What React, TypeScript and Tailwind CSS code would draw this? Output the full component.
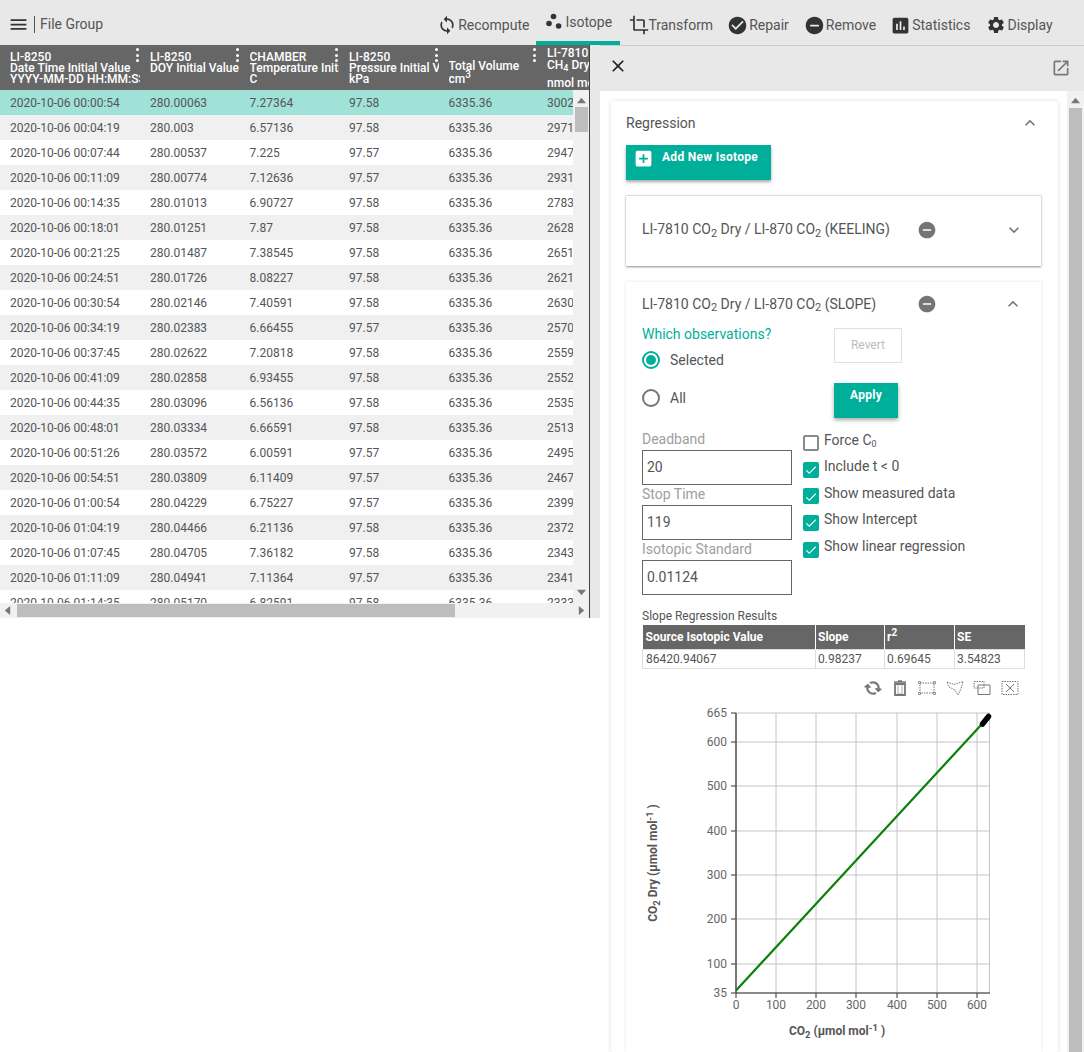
import React from "react";
import { FaSyncAlt } from "react-icons/fa";
import {
  MdAddBox,
  MdAssessment,
  MdAutorenew,
  MdCheck,
  MdCheckCircle,
  MdClose,
  MdCrop,
  MdExpandLess,
  MdExpandMore,
  MdMenu,
  MdOpenInNew,
  MdRemoveCircle,
  MdSettings,
} from "react-icons/md";

const rows = [
  ["2020-10-06 00:00:54", "280.00063", "7.27364", "97.58", "6335.36", "30023.4"],
  ["2020-10-06 00:04:19", "280.003", "6.57136", "97.58", "6335.36", "29714.1"],
  ["2020-10-06 00:07:44", "280.00537", "7.225", "97.57", "6335.36", "29472.9"],
  ["2020-10-06 00:11:09", "280.00774", "7.12636", "97.57", "6335.36", "29311.5"],
  ["2020-10-06 00:14:35", "280.01013", "6.90727", "97.58", "6335.36", "27835.2"],
  ["2020-10-06 00:18:01", "280.01251", "7.87", "97.58", "6335.36", "26281.7"],
  ["2020-10-06 00:21:25", "280.01487", "7.38545", "97.58", "6335.36", "26513.8"],
  ["2020-10-06 00:24:51", "280.01726", "8.08227", "97.58", "6335.36", "26217.4"],
  ["2020-10-06 00:30:54", "280.02146", "7.40591", "97.58", "6335.36", "26304.6"],
  ["2020-10-06 00:34:19", "280.02383", "6.66455", "97.57", "6335.36", "25701.3"],
  ["2020-10-06 00:37:45", "280.02622", "7.20818", "97.58", "6335.36", "25598.2"],
  ["2020-10-06 00:41:09", "280.02858", "6.93455", "97.58", "6335.36", "25524.1"],
  ["2020-10-06 00:44:35", "280.03096", "6.56136", "97.58", "6335.36", "25355.9"],
  ["2020-10-06 00:48:01", "280.03334", "6.66591", "97.58", "6335.36", "25133.0"],
  ["2020-10-06 00:51:26", "280.03572", "6.00591", "97.57", "6335.36", "24957.6"],
  ["2020-10-06 00:54:51", "280.03809", "6.11409", "97.57", "6335.36", "24671.2"],
  ["2020-10-06 01:00:54", "280.04229", "6.75227", "97.57", "6335.36", "23994.8"],
  ["2020-10-06 01:04:19", "280.04466", "6.21136", "97.58", "6335.36", "23722.5"],
  ["2020-10-06 01:07:45", "280.04705", "7.36182", "97.58", "6335.36", "23431.3"],
  ["2020-10-06 01:11:09", "280.04941", "7.11364", "97.57", "6335.36", "23417.7"],
  ["2020-10-06 01:14:35", "280.05170", "6.82591", "97.58", "6335.36", "23332.4"],
];

const colClass =
  "grid w-[658px] shrink-0 grid-cols-[140px_99.5px_99.5px_99.5px_98.5px_120px]";

const Dots = () => (
  <span className="absolute right-[1px] top-[3px] flex flex-col gap-[2.5px]">
    <span className="h-[3px] w-[3px] rounded-full bg-white" />
    <span className="h-[3px] w-[3px] rounded-full bg-white" />
    <span className="h-[3px] w-[3px] rounded-full bg-white" />
  </span>
);

const HeadCell = ({ children }: { children: React.ReactNode }) => (
  <div className="relative h-[45px] overflow-hidden pl-[10px] pr-0 pt-[7px] text-[12px] font-medium leading-[11px] text-white">
    <div className="overflow-hidden whitespace-nowrap">{children}</div>
    <Dots />
  </div>
);

const Arrow = ({ d }: { d: string }) => (
  <svg width="9" height="9" viewBox="0 0 10 10" className="shrink-0">
    <path d={d} fill="#777" />
  </svg>
);

const DataTable = () => (
  <div className="flex h-[573px] w-[589px] flex-col overflow-hidden">
    <div className="h-[45px] shrink-0 overflow-hidden bg-[#666666]">
      <div className={colClass}>
        <HeadCell>
          LI-8250
          <br />
          Date Time Initial Value
          <br />
          YYYY-MM-DD HH:MM:SS
        </HeadCell>
        <HeadCell>
          LI-8250
          <br />
          DOY Initial Value
        </HeadCell>
        <HeadCell>
          CHAMBER
          <br />
          Temperature Initial Value
          <br />C
        </HeadCell>
        <HeadCell>
          LI-8250
          <br />
          Pressure Initial Value
          <br />
          kPa
        </HeadCell>
        <HeadCell>
          <div className="pt-[8px] leading-[13px]">
            Total Volume
            <br />
            cm<sup className="text-[10px] leading-none">3</sup>
          </div>
        </HeadCell>
        <div className="h-[45px] overflow-hidden whitespace-nowrap pl-[10px] pt-[2px] text-[12px] font-medium leading-[12px] text-white">
          LI-7810
          <br />
          CH<sub className="text-[9px] leading-none">4</sub> Dry
          <div className="pt-[6px]">nmol mol⁻¹</div>
        </div>
      </div>
    </div>
    <div className="flex h-[513px] shrink-0">
      <div className="h-[513px] w-[573px] shrink-0 overflow-hidden bg-white">
        {rows.map((row, i) => (
          <div
            key={row[0]}
            className={`${colClass} h-[25px] items-center text-[12px] text-[#555555] ${
              i === 0 ? "bg-[#a0e2d8]" : i % 2 === 1 ? "bg-[#f0f0f0]" : "bg-white"
            }`}
          >
            {row.map((v, j) => (
              <div key={j} className="overflow-hidden whitespace-nowrap pl-[10px]">
                {v}
              </div>
            ))}
          </div>
        ))}
      </div>
      <div className="flex w-[16px] shrink-0 flex-col items-center bg-[#f1f1f1] pt-[6px]">
        <Arrow d="M5 2 L10 8 L0 8 Z" />
        <div className="mt-[2px] h-[25px] w-[13px] bg-[#bdbdbd]" />
        <div className="mt-auto pb-[6px]">
          <Arrow d="M0 2 L10 2 L5 8 Z" />
        </div>
      </div>
    </div>
    <div className="flex h-[15px] shrink-0 items-center bg-[#f1f1f1] px-[3px]">
      <Arrow d="M8 0 L8 10 L2 5 Z" />
      <div className="ml-[5px] h-[13px] w-[438px] bg-[#bdbdbd]" />
      <div className="ml-auto">
        <Arrow d="M2 0 L8 5 L2 10 Z" />
      </div>
    </div>
  </div>
);

const NavItem = ({
  icon,
  label,
  className,
}: {
  icon: React.ReactNode;
  label: string;
  className: string;
}) => (
  <div className={`flex items-center pt-[5px] text-[14px] text-[#555555] ${className}`}>
    {icon}
    <span>{label}</span>
  </div>
);

const TopBar = () => (
  <div className="flex h-[45px] shrink-0 items-stretch bg-[#e8e8e8]">
    <div className="flex items-center pl-[8px] pt-[3px]">
      <MdMenu size={21} className="text-[#333333]" />
      <span className="ml-[5px] h-[17px] w-px bg-[#555555]" />
      <span className="ml-[5px] text-[14px] text-[#555555]">File Group</span>
    </div>
    <NavItem
      className="ml-[334px]"
      icon={<MdAutorenew size={20} className="mr-[1px] -scale-x-100 text-[#333333]" />}
      label="Recompute"
    />
    <div className="ml-[7px] flex w-[84px] items-center border-b-[4px] border-[#00af9a] pl-[10px] pt-[3px] text-[14px] text-[#555555]">
      <svg width="16" height="16" viewBox="0 0 16 16" className="mr-[3px] -mt-[3px]">
        <circle cx="7.5" cy="3.5" r="2.8" fill="#333" />
        <circle cx="3" cy="10.5" r="2.8" fill="#333" />
        <circle cx="12.6" cy="13" r="2.8" fill="#333" />
      </svg>
      <span>Isotope</span>
    </div>
    <NavItem
      className="ml-[9px]"
      icon={<MdCrop size={20} className="-mr-[1px] text-[#333333]" />}
      label="Transform"
    />
    <NavItem
      className="ml-[15px]"
      icon={<MdCheckCircle size={21} className="mr-[1px] -ml-[1px] text-[#333333]" />}
      label="Repair"
    />
    <NavItem
      className="ml-[15px]"
      icon={<MdRemoveCircle size={21} className="mr-[1px] text-[#333333]" />}
      label="Remove"
    />
    <NavItem
      className="ml-[14px]"
      icon={<MdAssessment size={21} className="mr-[1px] text-[#333333]" />}
      label="Statistics"
    />
    <NavItem
      className="ml-[16px]"
      icon={<MdSettings size={20} className="mr-[1px] text-[#333333]" />}
      label="Display"
    />
  </div>
);

const Co2 = () => (
  <>
    CO<sub className="text-[11px] leading-none">2</sub>
  </>
);

const IsotopeHeader = ({ kind, open }: { kind: string; open: boolean }) => (
  <div className="flex items-center text-[14px] text-[#555555]">
    <span className="w-[275px] whitespace-nowrap">
      LI-7810 <Co2 /> Dry / LI-870 <Co2 /> ({kind})
    </span>
    <MdRemoveCircle size={20} className="text-[#757575]" />
    <span className="ml-auto mr-[1px]">
      {open ? (
        <MdExpandLess size={20} className="text-[#757575]" />
      ) : (
        <MdExpandMore size={20} className="text-[#757575]" />
      )}
    </span>
  </div>
);

const Field = ({ label, value, className }: { label: string; value: string; className: string }) => (
  <>
    <div className={`text-[14px] text-[#9e9e9e] ${className}`}>{label}</div>
    <div className="flex h-[35px] items-center border border-[#666666] pl-[4px] text-[14px] text-[#555555]">
      {value}
    </div>
  </>
);

const Check = ({
  label,
  checked,
  textClass = "-mt-[6px]",
}: {
  label: React.ReactNode;
  checked: boolean;
  textClass?: string;
}) => (
  <div className="flex h-[26.67px] items-start gap-[5px]">
    {checked ? (
      <span className="flex h-4 w-4 shrink-0 items-center justify-center rounded-[2px] bg-[#00af9a]">
        <MdCheck size={14} className="mt-[1px] text-white" />
      </span>
    ) : (
      <span className="h-4 w-4 shrink-0 rounded-[2px] border-2 border-[#8a8a8a]" />
    )}
    <span className={`${textClass} whitespace-nowrap text-[14px] leading-[20px] text-[#555555]`}>{label}</span>
  </div>
);

const Radio = ({ on, label, className }: { on: boolean; label: string; className: string }) => (
  <div className={`flex h-[18px] items-center text-[14px] text-[#555555] ${className}`}>
    <span
      className={`flex h-[18px] w-[18px] items-center justify-center rounded-full border-2 ${
        on ? "border-[#00af9a]" : "border-[#757575]"
      }`}
    >
      {on && <span className="h-[10px] w-[10px] rounded-full bg-[#00af9a]" />}
    </span>
    <span className="ml-[10px]">{label}</span>
  </div>
);

const PlotIcon = ({ children }: { children: React.ReactNode }) => (
  <svg width="18" height="16" viewBox="0 0 18 16" fill="none" stroke="#777" strokeWidth="1">
    {children}
  </svg>
);

const PlotTools = () => (
  <div className="mt-[11px] flex h-[16px] justify-end gap-[9.6px] pr-[6px]">
    <FaSyncAlt size={14} className="mr-[1px] mt-[1px] rotate-[50deg] text-[#777777]" />
    <PlotIcon>
      <path d="M4 4 H14 V15 H4 Z" strokeWidth="1.8" />
      <path d="M3 2 H15 M7 1 H11" strokeWidth="1.4" />
      <path d="M7 5 V14 H11 V5" strokeWidth="0.6" />
    </PlotIcon>
    <PlotIcon>
      <path d="M2 3 H16 V13 H2 Z" strokeDasharray="1.5 1" />
      <path d="M0.5 1.5 h2 v2 h-2 Z M15.5 1.5 h2 v2 h-2 Z M0.5 12.5 h2 v2 h-2 Z M15.5 12.5 h2 v2 h-2 Z" strokeWidth="0.8" />
    </PlotIcon>
    <PlotIcon>
      <path d="M1 2 L8 4.5 L17 1.5 L15 9 L12 15 L9 10 L3 7 Z" strokeDasharray="1.5 1" />
    </PlotIcon>
    <PlotIcon>
      <path d="M1 1.5 H11 V8 H1 Z" strokeDasharray="1.5 1" />
      <path d="M5 5 H17 V14.5 H5 Z" />
    </PlotIcon>
    <PlotIcon>
      <path d="M1 1.5 H17 V14.5 H1 Z" strokeDasharray="1.5 1" />
      <path d="M5 4 L13 12 M13 4 L5 12" />
    </PlotIcon>
  </div>
);

const yTicks: [number, string][] = [
  [713, "665"],
  [742, "600"],
  [786, "500"],
  [831, "400"],
  [875, "300"],
  [919, "200"],
  [964, "100"],
  [993, "35"],
];

const xTicks: [number, string][] = [
  [736, "0"],
  [776, "100"],
  [816, "200"],
  [856, "300"],
  [897, "400"],
  [937, "500"],
  [977, "600"],
];

const Chart = () => (
  <svg
    width="383"
    height="352"
    viewBox="642 700 383 352"
    className="mt-[4px] block"
    style={{ fontFamily: "Roboto, sans-serif" }}
  >
    {yTicks.map(([y, t]) => (
      <g key={t}>
        <line x1="736" x2="990" y1={y} y2={y} stroke="#c4c4c4" />
        <line x1="731" x2="736" y1={y} y2={y} stroke="#333" />
        <text x="727" y={y + 4} textAnchor="end" fontSize="12" fill="#666">
          {t}
        </text>
      </g>
    ))}
    {xTicks.map(([x, t]) => (
      <g key={t}>
        <line x1={x} x2={x} y1="713" y2="993" stroke="#c4c4c4" />
        <line x1={x} x2={x} y1="993" y2="998" stroke="#333" />
        <text x={x} y="1009" textAnchor="middle" fontSize="12" fill="#666">
          {t}
        </text>
      </g>
    ))}
    <line x1="989.5" x2="989.5" y1="713" y2="993" stroke="#c4c4c4" />
    <line x1="736" x2="736" y1="713" y2="993" stroke="#333" strokeWidth="1.2" />
    <line x1="736" x2="990" y1="993" y2="993" stroke="#333" strokeWidth="1.2" />
    <line x1="736" y1="990.5" x2="982" y2="724" stroke="#0a800a" strokeWidth="2.2" />
    <path d="M982.5 724 L988.5 716.5" stroke="#000" strokeWidth="5.5" strokeLinecap="round" />
    <text x="837" y="1035" textAnchor="middle" fontSize="12" fontWeight="700" fill="#555">
      CO<tspan fontSize="9.5" dy="3">2</tspan>
      <tspan dy="-3"> (µmol mol</tspan>
      <tspan fontSize="9.5" dy="-4">-1</tspan>
      <tspan dy="4"> )</tspan>
    </text>
    <text
      transform="rotate(-90 657 863)"
      x="657"
      y="863"
      textAnchor="middle"
      fontSize="12"
      fontWeight="700"
      fill="#555"
    >
      CO<tspan fontSize="9.5" dy="3">2</tspan>
      <tspan dy="-3"> Dry (µmol mol</tspan>
      <tspan fontSize="9.5" dy="-4">-1</tspan>
      <tspan dy="4"> )</tspan>
    </text>
  </svg>
);

const SlopeCard = () => (
  <div className="mt-[16px] bg-white px-4 shadow-[0_0_3px_rgba(0,0,0,0.12)]">
    <div className="flex h-[42px] items-center pr-[1px] pt-[2px]">
      <div className="w-full">
        <IsotopeHeader kind="SLOPE" open />
      </div>
    </div>

    {/* Which observations */}
    <div className="grid grid-cols-[192px_1fr]">
      <div>
        <div className="text-[14px] leading-[20px] text-[#00af9a]">Which observations?</div>
        <Radio on label="Selected" className="mt-[7px]" />
        <Radio on={false} label="All" className="mt-[20px]" />
      </div>
      <div className="pt-[4px]">
        <div className="flex h-[35px] w-[68px] items-center justify-center pb-[1px] border border-[#e0e0e0] text-[12px] text-[#bdbdbd]">
          Revert
        </div>
        <div className="mt-[20px] flex h-[35px] w-[64px] justify-center bg-[#00af9a] pt-[3px] text-[12px] font-bold tracking-[0.3px] text-white shadow-[0_2px_4px_rgba(0,0,0,0.35)]">
          Apply
        </div>
      </div>
    </div>

    {/* Fit options */}
    <div className="mt-[11px] grid grid-cols-[150px_1fr] gap-x-[11px]">
      <div>
        <Field label="Deadband" value="20" className="h-[21px] leading-[20px]" />
        <Field label="Stop Time" value="119" className="h-[20px] leading-[18px]" />
        <Field label="Isotopic Standard" value="0.01124" className="h-[20px] leading-[18px]" />
      </div>
      <div className="pt-[6px]">
        <Check
          checked={false}
          textClass="-mt-[5px]"
          label={
            <>
              Force C<sub className="text-[9px] leading-none">0</sub>
            </>
          }
        />
        <Check checked label="Include t < 0" />
        <Check checked textClass="-mt-[5px]" label="Show measured data" />
        <Check checked label="Show Intercept" />
        <Check checked label="Show linear regression" />
      </div>
    </div>

    {/* Results */}
    <div className="mt-[13px] h-[17px] text-[12px] leading-[17px] text-[#555555]">Slope Regression Results</div>
    <table className="w-[383px] table-fixed border-collapse text-[12px]">
      <thead>
        <tr className="h-[24px] bg-[#666666] text-left font-bold text-white">
          <th className="w-[173px] border-r border-white pl-[3px]">Source Isotopic Value</th>
          <th className="w-[69px] border-r border-white pl-[2px]">Slope</th>
          <th className="w-[70px] border-r border-white pl-[2px]">
            r<sup className="text-[10px] leading-none">2</sup>
          </th>
          <th className="pl-[2px]">SE</th>
        </tr>
      </thead>
      <tbody>
        <tr className="h-[18px] text-[#555555]">
          <td className="border border-[#dddddd] pl-[3px]">86420.94067</td>
          <td className="border border-[#dddddd] pl-[2px]">0.98237</td>
          <td className="border border-[#dddddd] pl-[2px]">0.69645</td>
          <td className="border border-[#dddddd] pl-[2px]">3.54823</td>
        </tr>
      </tbody>
    </table>
    <PlotTools />
    <Chart />
  </div>
);

const Drawer = () => (
  <div className="flex h-[1007px] min-w-0 flex-1 flex-col">
    <div className="flex h-[46px] shrink-0 items-center justify-between border-t border-[#cccccc] bg-[#e8e8e8] pb-[6px] pl-[8px] pr-[13px]">
      <MdClose size={20} className="text-[#222222]" />
      <MdOpenInNew size={20} className="mt-[5px] text-[#777777]" />
    </div>
    <div className="flex min-h-0 flex-1">
      <div className="min-w-0 flex-1 overflow-hidden pl-[11px] pr-[9px] pt-[10px]">
        <div className="rounded-[3px] bg-white pl-[15px] pr-[17px] shadow-[0_0_4px_rgba(0,0,0,0.14)]">
          <div className="flex h-[44px] items-center justify-between text-[14px] text-[#555555]">
            <span>Regression</span>
            <MdExpandLess size={20} className="mr-[1px] text-[#757575]" />
          </div>
          <div className="flex h-[35px] w-[145px] items-start bg-[#00af9a] pl-[10px] pt-[5px] text-[12px] font-bold tracking-[0.3px] text-white shadow-[0_2px_3px_rgba(0,0,0,0.35)]">
            <MdAddBox size={21} className="-ml-[3px] mr-[8px] -mt-[2px] text-white" />
            <span className="leading-[14px]">Add New Isotope</span>
          </div>
          <div className="mt-[15px] h-[71px] border-t border-[#dddddd] bg-white px-4 pt-[23px] shadow-[0_1px_2px_rgba(0,0,0,0.45)]">
            <IsotopeHeader kind="KEELING" open={false} />
          </div>
          <SlopeCard />
        </div>
      </div>
      <div className="flex w-[17px] shrink-0 flex-col items-center bg-[#f1f1f1] pt-[5px]">
        <Arrow d="M5 2 L10 8 L0 8 Z" />
        <div className="mt-[3px] w-[13px] flex-1 bg-[#bdbdbd]" />
      </div>
    </div>
  </div>
);

export default function App() {
  return (
    <div className="flex h-[1052px] w-[1084px] flex-col overflow-hidden bg-white font-['Roboto',sans-serif]">
      <TopBar />
      <div className="flex min-h-0 flex-1">
        <div className="flex h-[573px] w-[600px] shrink-0">
          <DataTable />
          <div className="h-full w-[11px] border-l border-[#444444] bg-[#e8e8e8]" />
        </div>
        <Drawer />
      </div>
    </div>
  );
}
